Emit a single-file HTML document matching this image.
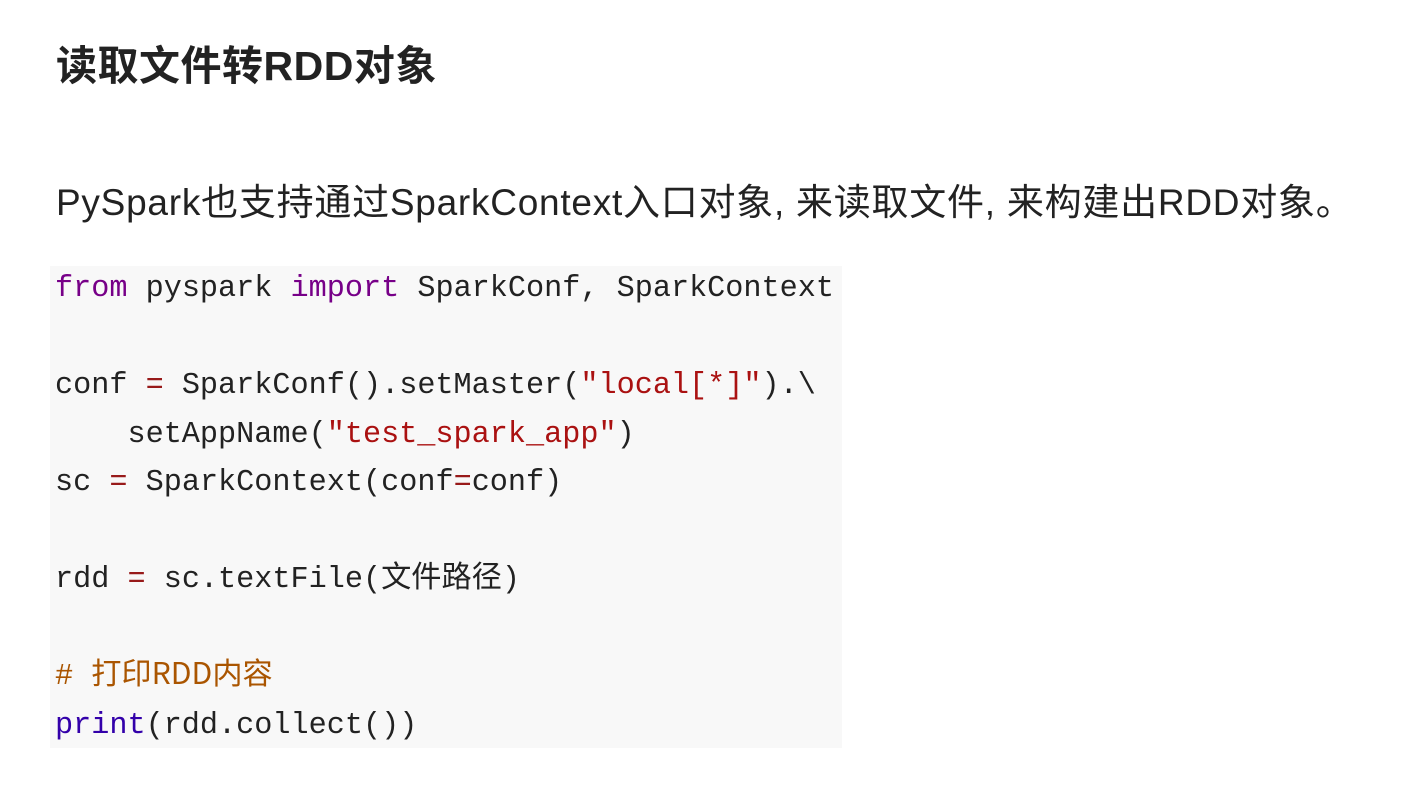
<!DOCTYPE html>
<html><head><meta charset="utf-8"><style>
html,body{margin:0;padding:0;background:#fff;width:1410px;height:798px;overflow:hidden}
h1{position:absolute;left:56px;top:40px;margin:0;font:bold 41px/52px "Liberation Sans","Noto Sans CJK SC",sans-serif;color:#222;white-space:nowrap;letter-spacing:0.5px}
p{position:absolute;left:56px;top:180px;margin:0;font:37px/46px "Liberation Sans","Noto Sans CJK SC",sans-serif;color:#222;white-space:nowrap;letter-spacing:0.75px}
.code{position:absolute;left:50px;top:266px;width:792px;height:482px;background:#f8f8f8}
.pre{position:absolute;left:55px;top:265px;margin:0;font:30.2px "Liberation Mono","Noto Sans CJK SC",monospace;color:#222}
.pre div{height:48.5px;line-height:48.5px;white-space:pre;overflow:visible}
.k{color:#770088}.s{color:#aa1111}.o{color:#981a1a}.c{color:#aa5500}.b{color:#3300aa}
</style></head><body>
<h1>读取文件转RDD对象</h1>
<p>PySpark也支持通过SparkContext入口对象, 来读取文件, 来构建出RDD对象。</p>
<div class="code"></div>
<div class="pre">
<div><span class="k">from</span> pyspark <span class="k">import</span> SparkConf, SparkContext</div>
<div> </div>
<div>conf <span class="o">=</span> SparkConf().setMaster(<span class="s">"local[*]"</span>).\</div>
<div>    setAppName(<span class="s">"test_spark_app"</span>)</div>
<div>sc <span class="o">=</span> SparkContext(conf<span class="o">=</span>conf)</div>
<div> </div>
<div>rdd <span class="o">=</span> sc.textFile(文件路径)</div>
<div> </div>
<div><span class="c"># 打印<span style="font-family:'Noto Sans CJK SC',sans-serif;line-height:1">RDD</span>内容</span></div>
<div><span class="b">print</span>(rdd.collect())</div>
</div>
</body></html>
